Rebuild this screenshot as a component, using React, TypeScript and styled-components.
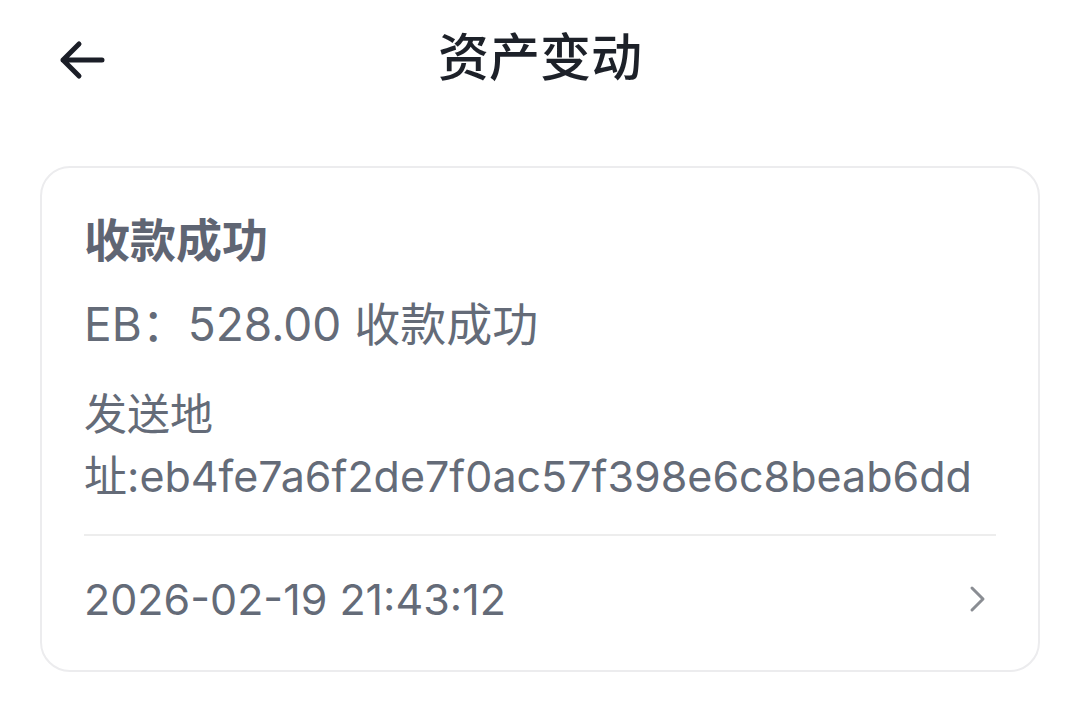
import { FC } from "react";
import styled, { createGlobalStyle } from "styled-components";

const GlobalStyle = createGlobalStyle`
	html, body {
		margin: 0;
		padding: 0;
		background: #fff;
	}
	body {
		font-family: Inter, "Noto Sans CJK SC", sans-serif;
	}
	* {
		box-sizing: border-box;
	}
`;

const record = {
	title: "收款成功",
	amount: "EB：528.00 收款成功",
	address: "发送地址:eb4fe7a6f2de7f0ac57f398e6c8beab6dd",
	time: "2026-02-19 21:43:12",
};

const App: FC = () => {
	return (
		<Page>
			<GlobalStyle />
			<Header>
				<BackButton type="button" aria-label="back">
					<svg width="48" height="40" viewBox="0 0 48 40" fill="none">
						<path
							d="M44 20H5M21 4L5 20l16 16"
							stroke="#1b1e27"
							strokeWidth="5"
							strokeLinecap="round"
							strokeLinejoin="round"
						/>
					</svg>
				</BackButton>
				<Title>资产变动</Title>
			</Header>

			<Card>
				<CardTitle>{record.title}</CardTitle>
				<Amount>{record.amount}</Amount>
				<Address>{record.address}</Address>
				<Divider />
				<Footer>
					<Time>{record.time}</Time>
					<svg width="18" height="28" viewBox="0 0 18 28" fill="none">
						<path
							d="M3 3l11 11L3 25"
							stroke="#8a8d93"
							strokeWidth="3"
							strokeLinecap="round"
							strokeLinejoin="round"
						/>
					</svg>
				</Footer>
			</Card>
		</Page>
	);
};

export default App;

const Page = styled.div`
	width: 1080px;
	min-height: 714px;
	padding: 0 40px;
	background: #fff;
`;

const Header = styled.header`
	position: relative;
	height: 116px;
	display: flex;
	align-items: center;
	justify-content: center;
	padding-bottom: 2px;
`;

const BackButton = styled.button`
	position: absolute;
	left: 18px;
	top: 40px;
	display: flex;
	padding: 0;
	border: none;
	background: none;
	cursor: pointer;
`;

const Title = styled.h1`
	margin: 0;
	font-size: 51px;
	font-weight: 500;
	line-height: 1;
	color: #1d2129;
`;

const Card = styled.section`
	margin-top: 50px;
	display: flex;
	flex-direction: column;
	padding: 42px 42px 41px;
	border: 2px solid #ececee;
	border-radius: 30px;
	color: #646b78;
`;

const CardTitle = styled.h2`
	margin: 0;
	font-size: 46px;
	font-weight: 700;
	line-height: 60px;
	color: #5f6573;
`;

const Amount = styled.p`
	margin: 24px 0 0;
	font-size: 46px;
	line-height: 60px;
`;

const Address = styled.p`
	margin: 29px 0 0;
	font-size: 43px;
	line-height: 62px;
`;

const Divider = styled.hr`
	margin: 27px 0 0;
	border: none;
	height: 2px;
	background: #ededed;
`;

const Footer = styled.div`
	margin-top: 33px;
	height: 60px;
	display: flex;
	align-items: center;
	justify-content: space-between;
	padding-right: 9px;
`;

const Time = styled.span`
	font-size: 43px;
	line-height: 60px;
`;
